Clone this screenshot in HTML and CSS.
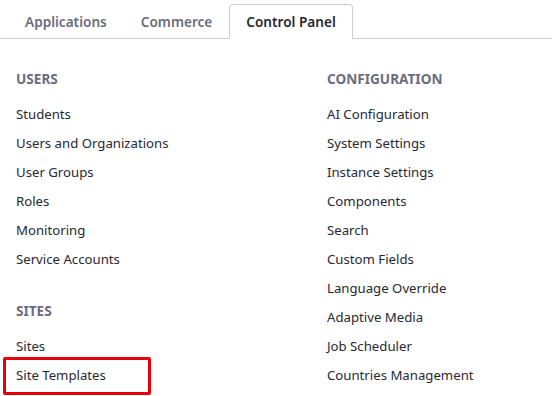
FILE: index.html
```html
<!DOCTYPE html>
<html lang="en">
<head>
  <meta charset="UTF-8" />
  <title>Control Panel</title>
  <link rel="stylesheet" href="styles.css">
</head>
<body>
  <ul class="tabs">
    <li class="tab">Applications</li>
    <li class="tab">Commerce</li>
    <li class="tab active">Control Panel</li>
  </ul>

  <div class="panel">
    <div class="column">
      <div class="section">
        <h3>Users</h3>
        <ul class="links">
          <li>Students</li>
          <li>Users and Organizations</li>
          <li>User Groups</li>
          <li>Roles</li>
          <li>Monitoring</li>
          <li>Service Accounts</li>
        </ul>
      </div>
      <div class="section">
        <h3>Sites</h3>
        <ul class="links">
          <li>Sites</li>
          <li class="marked">Site Templates</li>
        </ul>
      </div>
    </div>

    <div class="column">
      <div class="section">
        <h3>Configuration</h3>
        <ul class="links">
          <li>AI Configuration</li>
          <li>System Settings</li>
          <li>Instance Settings</li>
          <li>Components</li>
          <li>Search</li>
          <li>Custom Fields</li>
          <li>Language Override</li>
          <li>Adaptive Media</li>
          <li>Job Scheduler</li>
          <li>Countries Management</li>
        </ul>
      </div>
    </div>
  </div>
</body>
</html>
```

FILE: styles.css
```css
body {
  margin: 0;
  font-family: "Noto Sans", sans-serif;
  color: #272833;
  background: #fff;
}
ul {
  list-style: none;
  margin: 0;
  padding: 0;
}
.tabs {
  display: flex;
  padding: 4px 0 0 8px;
  border-bottom: 1px solid #cdced9;
}
.tab {
  padding: 0 16px;
  height: 33px;
  line-height: 33px;
  font-size: 13.6px;
  font-weight: 600;
  color: #6b6c7e;
  border: 1px solid transparent;
  border-bottom: none;
  border-radius: 4px 4px 0 0;
  margin-bottom: -1px;
}
.tab.active {
  color: #272833;
  background: #fff;
  border-color: #cdced9;
  height: 34px;
}
.panel {
  display: grid;
  grid-template-columns: 311px 1fr;
  padding: 30px 16px 6px;
}
.section {
  margin-bottom: 27px;
}
.section:last-child {
  margin-bottom: 0;
}
.section h3 {
  margin: 0 0 11px;
  font-size: 13.6px;
  line-height: 20px;
  font-weight: 700;
  text-transform: uppercase;
  color: #6b6c7e;
}
.links li {
  font-size: 13.2px;
  line-height: 29px;
}
.marked {
  position: relative;
}
.marked::after {
  content: "";
  position: absolute;
  left: -13px;
  top: -4px;
  width: 142px;
  height: 32px;
  border: 3px solid #e8000b;
  border-radius: 2px;
}
```
